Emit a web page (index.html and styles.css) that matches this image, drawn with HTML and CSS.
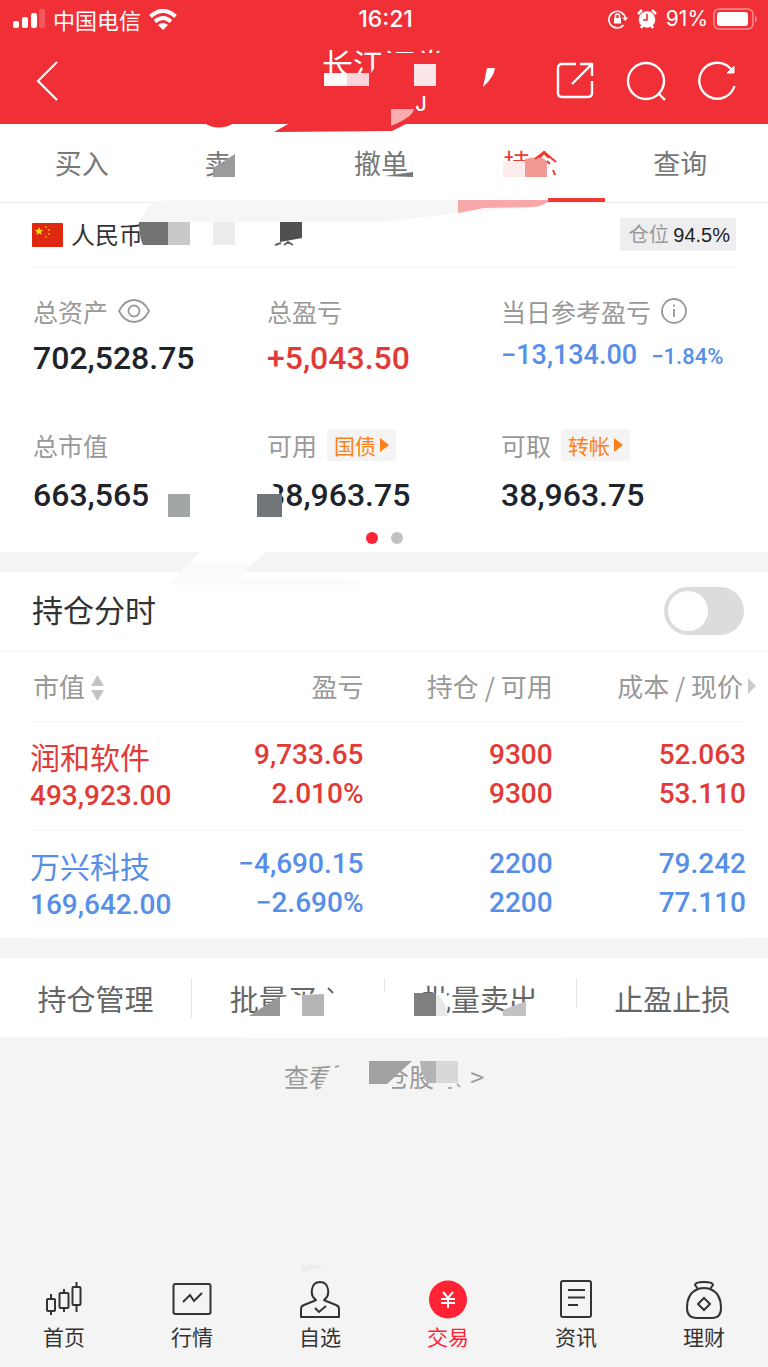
FILE: index.html
```html
<!DOCTYPE html>
<html lang="zh-CN">
<head>
<meta charset="utf-8">
<meta name="viewport" content="width=device-width, initial-scale=1">
<title>持仓</title>
<link rel="stylesheet" href="styles.css">
</head>
<body>
<div class="page">
  <header class="header">
    <div class="status">
      <div class="status-left">
        <svg width="32" height="20" viewBox="0 0 32 20" fill="#fff"><rect x="0" y="12" width="6" height="7" rx="2"/><rect x="9" y="8" width="6" height="11" rx="2"/><rect x="18" y="4" width="6" height="15" rx="2"/><rect x="26" y="0" width="6" height="19" rx="2" opacity=".2"/></svg>
        <span class="carrier">中国电信</span>
        <svg width="28" height="21" viewBox="0 0 28 21" fill="none" stroke="#fff" stroke-width="4"><path d="M1.5 7.5Q14-3.5 26.500 7.500"/><path d="M6 12.500Q14 5.500 22 12.500"/><path d="M14 21L9 16Q14 12 19 16Z" fill="#fff" stroke="none"/></svg>
      </div>
      <time class="clock">16:21</time>
      <div class="status-right">
        <svg width="20" height="20" viewBox="0 0 20 20" fill="none" stroke="#fff" stroke-width="1.600"><path d="M15.500 16A8.300 8.300 0 1 1 17.400 9.500"/><path d="M14 8.500h6L17.300 12z" fill="#fff" stroke="none"/><rect x="6" y="9" width="7" height="5.500" fill="#fff" stroke="none"/><path d="M7.500 9V7a2 2 0 0 1 4 0v2"/></svg>
        <svg width="20" height="20" viewBox="0 0 20 20"><circle cx="10" cy="10.500" r="8.300" fill="#fff"/><path d="M1 5L5 1M19 5L15 1M4 19l2-3M16 19l-2-3" stroke="#fff" stroke-width="2.500"/><path d="M10 5v6H6" fill="none" stroke="#f02f36" stroke-width="1.600"/></svg>
        <span class="percent">91%</span>
        <svg class="battery" width="45" height="22" viewBox="0 0 45 22"><rect x="1" y="1" width="39" height="20" rx="5" fill="none" stroke="#f98f92" stroke-width="1.500"/><rect x="4" y="4" width="31" height="14" rx="3" fill="#fff"/><path d="M42 7.500Q46 11 42 14.500Z" fill="#f98f92"/></svg>
      </div>
    </div>
    <div class="nav">
      <button class="icon-btn" aria-label="返回"><svg width="24" height="42" viewBox="0 0 24 42" fill="none" stroke="#fff" stroke-width="2.200"><path d="M22 2L3 21L22 40"/></svg></button>
      <div class="title-box"><h1 class="title">长江证券</h1><div class="subtitle">J</div></div>
      <div class="nav-actions">
        <button class="icon-btn" aria-label="分享"><svg width="38" height="38" viewBox="0 0 38 38" fill="none" stroke="#fff" stroke-width="2.400"><path d="M20 2H6Q2 2 2 6V31Q2 35 6 35H32Q36 35 36 31V19"/><path d="M24 2H36V14M36 2L16 22"/></svg></button>
        <button class="icon-btn" aria-label="搜索"><svg width="40" height="40" viewBox="0 0 40 40" fill="none" stroke="#fff" stroke-width="2.400"><circle cx="20" cy="20" r="18"/><path d="M32 32L39 39"/></svg></button>
        <button class="icon-btn" aria-label="刷新"><svg width="38" height="40" viewBox="0 0 38 40" fill="none" stroke="#fff" stroke-width="2.400"><path d="M36.500 25A18 18 0 1 1 33 8"/><path d="M36 5V12H29Z" fill="#fff" stroke-width="1"/></svg></button>
      </div>
    </div>
  </header>

  <nav class="tabs">
    <a class="tab" href="#">买入</a><a class="tab" href="#">卖出</a><a class="tab" href="#">撤单</a><a class="tab tab-active" href="#">持仓</a><a class="tab" href="#">查询</a>
  </nav>

  <section class="account">
    <div class="account-head">
      <svg width="31" height="24" viewBox="0 0 31 24"><rect width="31" height="24" rx="1" fill="#de2910"/><path d="M7 4l1.200 2.800 3 .2-2.300 2 .8 3L7 10.300 4.300 12l.8-3-2.300-2 3-.2z" fill="#ffde00"/><g fill="#f5a800"><circle cx="14" cy="4" r="1"/><circle cx="17" cy="7" r="1"/><circle cx="17" cy="11" r="1"/><circle cx="14" cy="14" r="1"/></g></svg>
      <span class="currency">人民币账户</span>
      <span class="ratio">仓位 <b class="ratio-value">94.5%</b></span>
    </div>
    <dl class="stats">
      <div class="stat"><dt class="label">总资产 <svg width="32" height="24" viewBox="0 0 32 24" fill="none" stroke="#999" stroke-width="1.800"><path d="M1 12C5 4 10 1 16 1s11 3 15 11C27 20 22 23 16 23S5 20 1 12Z"/><circle cx="16" cy="12" r="5.500"/></svg></dt><dd class="value">702,528.75</dd></div>
      <div class="stat"><dt class="label">总盈亏</dt><dd class="value value-gain">+5,043.50</dd></div>
      <div class="stat"><dt class="label">当日参考盈亏 <svg width="26" height="26" viewBox="0 0 26 26" fill="none" stroke="#999" stroke-width="1.800"><circle cx="13" cy="13" r="12"/><path d="M13 11v8M13 6.500v2"/></svg></dt><dd class="value value-day"><span>−13,134.00</span><small class="day-rate">−1.84%</small></dd></div>
      <div class="stat stat-low"><dt class="label">总市值</dt><dd class="value">663,565</dd></div>
      <div class="stat stat-low"><dt class="label">可用 <button class="chip">国债<i class="chip-arrow"></i></button></dt><dd class="value">38,963.75</dd></div>
      <div class="stat stat-low"><dt class="label">可取 <button class="chip">转帐<i class="chip-arrow"></i></button></dt><dd class="value">38,963.75</dd></div>
    </dl>
    <div class="dots"><i class="dot dot-on"></i><i class="dot"></i></div>
  </section>

  <section class="holdings">
    <div class="switch-row"><label for="intraday">持仓分时</label><input class="switch" id="intraday" type="checkbox" role="switch"></div>
    <table class="table">
      <colgroup><col class="col-a"><col class="col-b"><col class="col-c"><col class="col-d"></colgroup>
      <thead><tr>
        <th>市值<svg class="sort" width="13" height="26" viewBox="0 0 13 26" fill="#c4c4c4"><path d="M0 11L6.500 0 13 11zM0 15L6.500 26 13 15z"/></svg></th>
        <th>盈亏</th><th>持仓 / 可用</th>
        <th class="more">成本 / 现价<i class="more-arrow"></i></th>
      </tr></thead>
      <tbody>
        <tr class="gain"><td><div class="name">润和软件</div><div class="amount">493,923.00</div></td><td><div>9,733.65</div><div>2.010%</div></td><td><div>9300</div><div>9300</div></td><td><div>52.063</div><div>53.110</div></td></tr>
        <tr class="loss"><td><div class="name">万兴科技</div><div class="amount">169,642.00</div></td><td><div>−4,690.15</div><div>−2.690%</div></td><td><div>2200</div><div>2200</div></td><td><div>79.242</div><div>77.110</div></td></tr>
      </tbody>
    </table>
  </section>

  <div class="actions">
    <button class="action">持仓管理</button><button class="action">批量买入</button><button class="action">批量卖出</button><button class="action">止盈止损</button>
  </div>
  <a class="history" href="#">查看已清仓股票 &nbsp;&gt;</a>

  <nav class="tabbar">
    <a class="bar-item" href="#"><svg width="40" height="40" viewBox="0 0 40 40" fill="none" stroke="#333" stroke-width="2"><rect x="3" y="19" width="8" height="12" rx="1"/><rect x="15.500" y="13" width="9" height="15" rx="1"/><rect x="28.500" y="7" width="8" height="18" rx="1"/><path d="M7 14v5M7 31v4M20 9v4M20 28v4M32.500 2v5M32.500 25v7"/></svg>首页</a>
    <a class="bar-item" href="#"><svg width="40" height="40" viewBox="0 0 40 40" fill="none" stroke="#333" stroke-width="2"><rect x="1.500" y="4" width="37" height="30" rx="2"/><path d="M11 22l7-7 4 6 8-8"/></svg>行情</a>
    <a class="bar-item" href="#"><svg width="40" height="40" viewBox="0 0 40 40" fill="none" stroke="#333" stroke-width="2"><path d="M16 20C9 15 11 2 20 2s11 13 4 18l2 1 10 4q3 1 3 4v8H1v-8q0-3 3-4l10-4z" stroke-linejoin="round"/><path d="M15 28l4 4 7-6"/></svg>自选</a>
    <a class="bar-item bar-on" href="#"><svg width="40" height="40" viewBox="0 0 40 40" fill="none"><circle cx="20" cy="19.500" r="19" fill="#ff2334"/><path d="M15 12l5 6 5-6M13 19h14M13 23h14M20 18v10" stroke="#fff" stroke-width="2"/></svg>交易</a>
    <a class="bar-item" href="#"><svg width="40" height="40" viewBox="0 0 40 40" fill="none" stroke="#333" stroke-width="2"><rect x="5" y="1" width="30" height="36" rx="2"/><path d="M12 10h17M12 17.500h17M12 25h10"/></svg>资讯</a>
    <a class="bar-item" href="#"><svg width="40" height="40" viewBox="0 0 40 40" fill="none" stroke="#333" stroke-width="2"><path d="M14 9L11 5Q11 2 20 2T29 5L26 9M14 9Q20 7 26 9M14 9C6 12 3 20 3 28q0 10 10 10h15q9 0 9-10C37 20 34 12 26 9M20 18l6 6-6 6-6-6z"/></svg>理财</a>
  </nav>

  <svg class="mosaic" viewBox="0 0 768 1367" preserveAspectRatio="none" aria-hidden="true">
    <g fill="#f02f36"><path d="M316 73H450V96H316zM384 53H450V75H370zM204 123Q219 132 234 123zM274 132L290 123H408L392 131Z"/></g>
    <path d="M324 73h23v13h-23z" fill="#fffafa"/><path d="M347 73h22v13h-22z" fill="#fbd4d7"/><path d="M414 64h22v22h-22z" fill="#fde6e7"/>
    <path d="M487 68h8q-1 9-12 19z" fill="#fff"/><path d="M391 109h23q-1 8-23 17z" fill="#f8aeb1"/>
    <path d="M238 150h25v28h-50v-7z" fill="#fff"/><path d="M213 168L235 154V177H213z" fill="#9b9b9b"/>
    <path d="M386 176l27-4v10h-27z" fill="#fff"/><path d="M384 176l29-4v5z" fill="#777"/>
    <path d="M500 161h25l33-4v24h-58z" fill="#fff"/><path d="M503 162h23v15h-23z" fill="#fdeceb"/><path d="M525 159q19-4 22 3v15h-22z" fill="#f29994"/><path d="M535 159l9-7 12 10M547 161l3 3M553 170l2 5" fill="none" stroke="#ee3933" stroke-width="2"/>
    <path d="M450 197h98v4h-98z" fill="#fff"/>
    <path d="M140 222Q145 200 172 200H548L540 207 458 213 384 222z" fill="#f6f6f6"/><path d="M458 200H549Q545 206 532 207L484 208 458 213z" fill="#f8a8a9"/>
    <path d="M142 222H310V251H142z" fill="#fff"/><path d="M139 222h29v23h-25q-4-8-4-23z" fill="#737373"/><path d="M168 222h22v23h-22z" fill="#c9c9c9"/><path d="M213 222h22v23h-22z" fill="#ececec"/><path d="M280 222h22v16l-22 4z" fill="#505050"/><path d="M275 245l6-2M284 245l4-3 5 3" fill="none" stroke="#666" stroke-width="2"/>
    <path d="M148 480H168V515H148zM258 480H268L279 491 282 515H258z" fill="#fff"/><path d="M168 494h22v23h-22z" fill="#a2a6a7"/><path d="M257 494h25v23h-25z" fill="#737678"/>
    <path d="M201 551h67l-28 22h-59z" fill="#fff"/><path d="M190 562h65l-17 17H345l24 6H168z" fill="#fbfbfb"/>
    <path d="M250 1016L280 997 302 995 318 993 335 996V1016z" fill="#fff"/><path d="M324 983h24v33h-24z" fill="#fff"/><path d="M328 988l5 5" stroke="#666" stroke-width="2"/><path d="M249 1016L280 996V1016z" fill="#979797"/><path d="M302 995l22-1v22h-22z" fill="#b5b5b5"/>
    <path d="M414 993h33v24h-33zM512 1007l27-11v21h-34z" fill="#fff"/><path d="M414 993h22v23h-22z" fill="#7f7f7f"/><path d="M436 993q10 8 12 23h-12z" fill="#e8e8e8"/><path d="M503 1010l23-9v15h-23z" fill="#c2c2c2"/>
    <path d="M378 992h12v32h-12zM571 1008h10v16h-10z" fill="#fff"/>
    <path d="M320 1090l12-26 0-4h60v30h-72zM434 1060h30v30h-30z" fill="#f4f4f4"/><path d="M335 1067l4-1M448 1088h4M457 1084l3 3" stroke="#999" stroke-width="1.500"/><path d="M369 1061h43l-25 23h-18z" fill="#a1a1a1"/><path d="M420 1061h16v22h-9q-6-8-7-22z" fill="#b3b3b3"/><path d="M436 1061h22v22h-22z" fill="#d8d8d8"/>
    <path d="M240 1036H568L565 1038H242z" fill="#fff"/><path d="M302 1265h22l-22 8z" fill="#ececec"/>
  </svg>
</div>
</body>
</html>
```
FILE: styles.css
```css
* { box-sizing: border-box; }
body, h1, dl, dd { margin: 0; }
body { background: #f4f4f4; font-family: "Noto Sans CJK SC", sans-serif; color: #333; }
button { font: inherit; color: inherit; border: 0; background: none; padding: 0; }
a { color: inherit; text-decoration: none; }
svg { display: block; flex: none; }
.page { position: relative; min-height: 100vh; display: flex; flex-direction: column; }

.header { background: #f02f36; color: #fff; height: 124px; }
.status { display: grid; grid-template-columns: 1fr auto 1fr; align-items: center; height: 38px; padding: 0 10px 0 13px; }
.status-left, .status-right { display: flex; align-items: center; }
.status-left { gap: 8px; }
.carrier { font-size: 22px; line-height: 32px; }
.clock { font: 500 23px/32px Inter, sans-serif; }
.status-right { justify-content: flex-end; gap: 9px; }
.percent { font: 21px/32px Inter, sans-serif; }
.battery { margin-left: -4px; }
.nav { position: relative; display: flex; align-items: center; justify-content: space-between; height: 86px; padding: 0 32px 0 35px; }
.title-box { position: absolute; left: 0; right: 0; top: 2px; text-align: center; }
.title { font-size: 31px; line-height: 46px; font-weight: 400; }
.subtitle { font: 500 20px/24px Inter, sans-serif; padding: 6px 0 0 74px; }
.nav-actions { display: flex; align-items: center; gap: 32px; }
.icon-btn { position: relative; z-index: 1; }

.tabs { display: flex; height: 79px; padding: 0 13px 0 7px; background: #fff; border-bottom: 1px solid #ececec; }
.tab { flex: 1; text-align: center; font-size: 27px; line-height: 78px; color: #777; }
.tab-active { color: #ee3933; border-bottom: 4px solid #ee3933; }

.account { background: #fff; height: 349px; }
.account-head { display: flex; align-items: center; height: 64px; margin: 0 32px; border-bottom: 1px solid #f4f4f4; }
.currency { font-size: 24px; line-height: 34px; padding-bottom: 2px; margin-left: 8px; }
.ratio { margin-left: auto; padding: 0 6px 0 9px; font-size: 20px; line-height: 32px; background: #eeeef1; color: #999; }
.ratio-value { font: 20px/32px "Liberation Sans", sans-serif; color: #222; }
.stats { display: grid; grid-template-columns: 1fr 1fr 1fr; padding: 25px 33px 0; row-gap: 46px; }
.label { display: flex; align-items: center; gap: 10px; height: 38px; font-size: 25px; line-height: 34px; color: #999; white-space: nowrap; }
.value { height: 50px; font: 500 32px/56px Roboto, sans-serif; color: #20242a; white-space: nowrap; }
.stat-low .value { padding-top: 3px; }
.value-gain { color: #e23a36; }
.value-day { display: flex; align-items: baseline; gap: 14px; font-size: 27px; line-height: 50px; color: #568ee8; }
.day-rate { font-size: 22px; }
.chip { display: flex; align-items: center; gap: 4px; height: 32px; padding: 0 7px; border-radius: 3px; background: #f4f4f4; color: #ff8019; font-size: 21px; line-height: 28px; }
.chip-arrow { border: 7px solid transparent; border-left: 9px solid #ff8019; border-right: 0; }
.dots { display: flex; justify-content: center; gap: 13px; padding-top: 18px; }
.dot { width: 12px; height: 12px; border-radius: 50%; background: #c2c2c2; }
.dot-on { background: #ff2334; }

.holdings { margin-top: 20px; background: #fff; height: 366px; }
.switch-row { display: flex; align-items: center; justify-content: space-between; height: 79px; padding: 0 24px 0 32px; border-bottom: 1px solid #f4f4f4; font-size: 31px; line-height: 44px; }
.switch-row label { padding-bottom: 4px; }
.switch { appearance: none; margin: 0; width: 80px; height: 48px; border-radius: 24px; padding: 4px; background: #dcdcdc; }
.switch::before { content: ""; display: block; width: 40px; height: 40px; border-radius: 50%; background: #fff; }
.switch:checked::before { margin-left: auto; }
.table { width: calc(100% - 52px); margin: 0 22px 0 30px; table-layout: fixed; border-collapse: collapse; }
.col-a { width: 22%; }
.col-b { width: 25%; }
.col-c { width: 26%; }
.col-d { width: 27%; }
th { height: 70px; padding: 0; font-size: 26px; font-weight: 400; color: #999; text-align: right; white-space: nowrap; border-bottom: 1px solid #f4f4f4; }
th:first-child, td:first-child { text-align: left; }
th:first-child { padding-left: 3px; }
th:nth-child(2), td:nth-child(2) { padding-right: 3px; }
.sort { display: inline-block; margin-left: 6px; vertical-align: -4px; }
.more { position: relative; padding-right: 3px; }
.more-arrow { position: absolute; right: -10px; top: 27px; border: 8px solid transparent; border-left: 8px solid #ccc; border-right: 0; }
td { height: 109px; padding: 0 0 4px; font: 500 28px/39px Roboto, sans-serif; text-align: right; border-bottom: 1px solid #f6f6f6; }
.name { font: 30px/43px "Noto Sans CJK SC", sans-serif; }
.amount { line-height: 35px; }
.gain { color: #e23a36; }
.loss { color: #568ee8; }

.actions { display: flex; align-items: center; margin-top: 20px; height: 79px; background: #fff; }
.action { flex: 1; height: 40px; font-size: 29px; line-height: 38px; color: #666; border-left: 1px solid #e4e4e4; }
.action:first-child { border-left: 0; }
.history { padding-top: 20px; text-align: center; font-size: 25px; line-height: 38px; color: #999; }

.tabbar { display: flex; margin-top: auto; padding-bottom: 15px; }
.bar-item { flex: 1; display: flex; flex-direction: column; align-items: center; font-size: 21px; line-height: 32px; }
.bar-on { color: #ff2334; }
.mosaic { position: absolute; left: 0; top: 0; width: 100%; height: 1367px; pointer-events: none; }
```
